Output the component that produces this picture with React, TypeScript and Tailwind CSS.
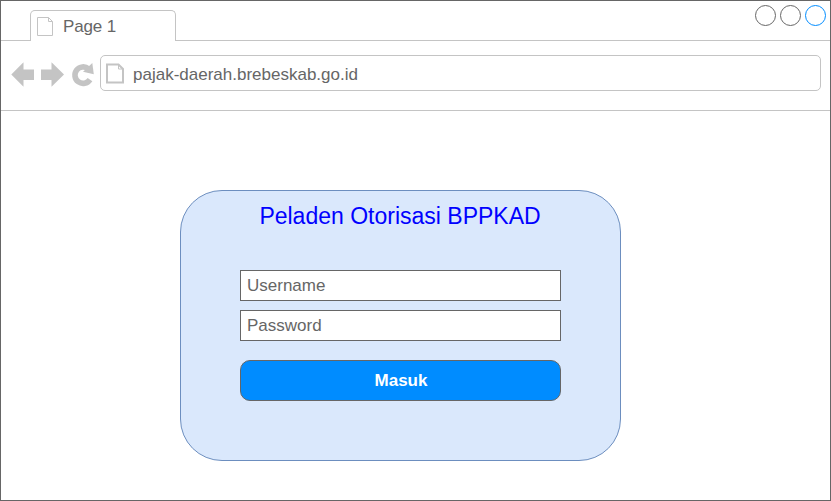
import React from "react";

function WindowButton({ className }: { className: string }) {
  return (
    <svg className={className} width="21" height="21" viewBox="0 0 21 21" fill="none" stroke="currentColor">
      <circle cx="10.5" cy="10.5" r="10" />
    </svg>
  );
}

function TabStrip() {
  return (
    <div className="flex h-10 shrink-0 items-end">
      <div className="h-10 w-[29px] border-b border-[#c4c4c4]" />
      <div className="flex h-[31px] w-[146px] items-start rounded-t-[5px] border border-b-0 border-[#c4c4c4] pl-[6px] pt-[6px]">
        <svg width="17" height="19" viewBox="0 0 17 19" fill="none" stroke="#c4c4c4" className="shrink-0">
          <path d="M.5.5h11l4 4v14H.5zM11.5.5v4h4" />
        </svg>
        <span className="ml-[9px] text-[17px] leading-5 tracking-[-0.15px]">Page 1</span>
      </div>
      <div className="flex h-10 flex-1 items-start justify-end gap-1 border-b border-[#c4c4c4] pr-1 pt-1">
        <WindowButton className="text-[#666666]" />
        <WindowButton className="text-[#666666]" />
        <WindowButton className="text-[#008cff]" />
      </div>
    </div>
  );
}

function AddressBar() {
  return (
    <div className="flex h-[70px] shrink-0 items-start border-b border-[#c4c4c4] pl-[10px] pr-[9px] pt-[14px]">
      <svg width="84" height="36" viewBox="11 55 84 36" className="shrink-0" fill="#c4c4c4">
        <path d="M11.3 74.5 23.5 62.2v7.3H34v10.5H23.5v6.8zM64 74.5 51.5 62.2v7.3H41v10.5h10.5v6.8z" />
        <path
          d="M90 79.6A8.2 8.2 0 1 1 88.5 68.9"
          fill="none"
          stroke="#c4c4c4"
          strokeWidth="5.6"
        />
        <path d="M92.3 63 93.8 74.2 83 71.8z" />
      </svg>
      <div className="ml-[5px] flex h-9 flex-1 items-start rounded-[5px] border border-[#c4c4c4] pl-[5px] pt-[7px]">
        <svg width="18" height="21" viewBox="0 0 18 21" fill="none" stroke="#c4c4c4" className="shrink-0">
          <path d="M1 1.5h11.5l4.5 4.5v13.5H1z" strokeWidth="2" />
          <path d="M12.5 1.5v4.5h4.5" />
        </svg>
        <span className="ml-[9px] mt-[2px] text-[17px] leading-5">pajak-daerah.brebeskab.go.id</span>
      </div>
    </div>
  );
}

function LoginCard() {
  return (
    <div className="flex h-[271px] w-[441px] flex-col items-center rounded-[42px] border border-[#6c8ebf] bg-[#dae8fc]">
      <h1 className="mr-px mt-[11px] text-[23px] leading-7 text-[#0000ff]">Peladen Otorisasi BPPKAD</h1>
      <div className="mt-10 flex w-[321px] flex-col">
        <input
          placeholder="Username"
          className="h-[31px] border border-[#666666] bg-white px-[6px] text-[17px] leading-5 placeholder:text-[#666666] placeholder:opacity-100"
        />
        <input
          placeholder="Password"
          className="mt-[9px] h-[31px] border border-[#666666] bg-white px-[6px] text-[17px] leading-5 placeholder:text-[#666666] placeholder:opacity-100"
        />
        <button className="mt-[19px] h-[41px] rounded-[10px] border border-[#666666] bg-[#008cff] pl-px pt-px text-[17px] font-bold leading-5 text-white">
          Masuk
        </button>
      </div>
    </div>
  );
}

export default function App() {
  return (
    <div className="flex h-[501px] w-[831px] flex-col border border-[#666666] bg-white font-['Liberation_Sans',Arial,sans-serif] text-[#666666]">
      <TabStrip />
      <AddressBar />
      <main className="pl-[179px] pt-[79px]">
        <LoginCard />
      </main>
    </div>
  );
}
